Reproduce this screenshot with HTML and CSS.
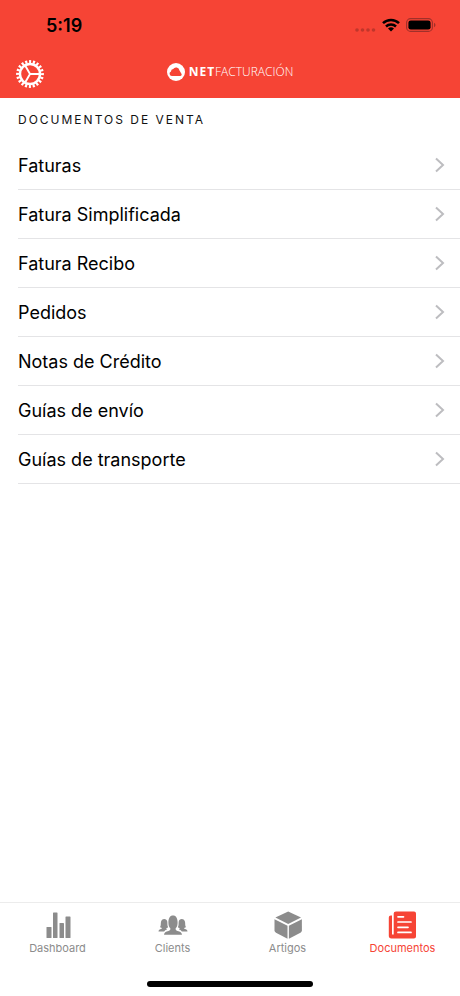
FILE: index.html
```html
<!DOCTYPE html>
<html lang="pt">
<head>
  <meta charset="UTF-8">
  <meta name="viewport" content="width=device-width, initial-scale=1">
  <title>Netfacturación - Documentos</title>
  <link rel="stylesheet" href="styles.css">
</head>
<body>
  <header class="app-header">
    <div class="status-bar">
      <span class="status-time">5:19</span>
      <div class="status-icons">
        <svg class="signal" width="22" height="4" viewBox="0 0 22 4">
          <circle cx="3" cy="2" r="1.8"/>
          <circle cx="8.5" cy="2" r="1.8"/>
          <circle cx="14" cy="2" r="1.8"/>
          <circle cx="19.5" cy="2" r="1.8"/>
        </svg>
        <svg width="18" height="14" viewBox="0 0 18 14">
          <g fill="none" stroke="#000" stroke-width="2.5">
            <path d="M1 5.2a11.5 11.5 0 0 1 16 0"/>
            <path d="M4 8.5a7.2 7.2 0 0 1 10 0"/>
          </g>
          <path d="M9 13.6 6 10.6a4.3 4.3 0 0 1 6 0z"/>
        </svg>
        <svg width="30" height="14" viewBox="0 0 30 14">
          <rect x=".6" y=".6" width="25.8" height="12.8" rx="4" fill="none" stroke="#a0302a" stroke-width="1.1"/>
          <rect x="2.4" y="2.4" width="22.2" height="9.2" rx="2.4"/>
          <path d="M28 4.8c2 .8 2 3.6 0 4.4z" fill="#a0302a"/>
        </svg>
      </div>
    </div>
    <div class="nav-bar">
      <button class="settings" type="button" aria-label="Definições">
        <svg width="28" height="28" viewBox="0 0 28 28" fill="none" stroke="#fff">
          <circle cx="14" cy="14" r="12.3" stroke-width="3.2" pathLength="40" stroke-dasharray="1.1 .9" stroke-dashoffset=".5"/>
          <circle cx="14" cy="14" r="10" stroke-width="2.4"/>
          <path d="M14 14h10M14 14 9 5.3M14 14 9 22.7" stroke-width="1.9"/>
        </svg>
      </button>
      <div class="logo">
        <svg width="18" height="18" viewBox="0 0 18 18">
          <circle cx="9" cy="9" r="9" fill="#fff"/>
          <path d="M4.8 13a2.4 2.4 0 0 1-.8-4.6 2.3 2.3 0 0 1 2.2-2.4 3.5 3.5 0 0 1 6.3 1.4l1.8 3.1a1.5 1.5 0 0 1-1.3 2.5z" fill="#f64435"/>
        </svg>
        <span><b>NET</b>FACTURACIÓN</span>
      </div>
    </div>
  </header>

  <main class="content">
    <h1 class="list-title">DOCUMENTOS DE VENTA</h1>
    <ul class="doc-list">
      <li><a href="#">Faturas <svg class="chevron" width="10" height="16" viewBox="0 0 10 16"><path d="M1 1.5 8 8l-7 6.5"/></svg></a></li>
      <li><a href="#">Fatura Simplificada <svg class="chevron" width="10" height="16" viewBox="0 0 10 16"><path d="M1 1.5 8 8l-7 6.5"/></svg></a></li>
      <li><a href="#">Fatura Recibo <svg class="chevron" width="10" height="16" viewBox="0 0 10 16"><path d="M1 1.5 8 8l-7 6.5"/></svg></a></li>
      <li><a href="#">Pedidos <svg class="chevron" width="10" height="16" viewBox="0 0 10 16"><path d="M1 1.5 8 8l-7 6.5"/></svg></a></li>
      <li><a href="#">Notas de Crédito <svg class="chevron" width="10" height="16" viewBox="0 0 10 16"><path d="M1 1.5 8 8l-7 6.5"/></svg></a></li>
      <li><a href="#">Guías de envío <svg class="chevron" width="10" height="16" viewBox="0 0 10 16"><path d="M1 1.5 8 8l-7 6.5"/></svg></a></li>
      <li><a href="#">Guías de transporte <svg class="chevron" width="10" height="16" viewBox="0 0 10 16"><path d="M1 1.5 8 8l-7 6.5"/></svg></a></li>
    </ul>
  </main>

  <footer class="tab-bar">
    <nav class="tabs">
      <a href="#">
        <svg width="30" height="28" viewBox="0 0 30 28">
          <rect x="3.5" y="16" width="5" height="11" rx=".6"/>
          <rect x="10" y="1.5" width="4.5" height="25.5" rx=".6"/>
          <rect x="16.5" y="12" width="4.5" height="15" rx=".6"/>
          <rect x="22.5" y="5.5" width="5" height="21.5" rx=".6"/>
        </svg>
        Dashboard
      </a>
      <a href="#">
        <svg width="30" height="28" viewBox="0 0 30 28">
          <path d="M6 23.800c0-2.300 1.900-3.300 4.500-3.900 1.500-.4 2-1 1.900-2.300-1.500-1.500-2-3.300-2-6 0-4.400 1.500-7.100 4.600-7.100s4.600 2.700 4.600 7.100c0 2.700-.5 4.500-2 6-.1 1.300.4 1.900 1.900 2.300 2.600.6 4.500 1.600 4.500 3.900z"/>
          <path d="M.5 20.500c0-1.700 1.300-2 2.600-2.500.9-.3 1-.9.3-1.200-.7-.2-1.200-.5-1.300-.9 1-1.300.5-3.300.9-5.200.4-1.700 1.500-2.800 3.200-2.800s2.800 1 3.100 2.800c.2 2.100-.1 4.300.8 5.300-.2.600-.8.800-1.500 1-.5.400-.2 1 .5 1.300-1 .5-2.100 1-3 2.200z"/>
          <path d="M29.500 20.500c0-1.700-1.300-2-2.600-2.500-.9-.3-1-.9-.3-1.200.7-.2 1.200-.5 1.300-.9-1-1.300-.5-3.300-.9-5.200-.4-1.700-1.500-2.800-3.200-2.800s-2.800 1-3.100 2.800c-.2 2.100.1 4.300-.8 5.300.2.600.8.800 1.500 1 .5.400.2 1-.5 1.300 1 .5 2.100 1 3 2.200z"/>
        </svg>
        Clients
      </a>
      <a href="#">
        <svg width="30" height="28" viewBox="0 0 30 28">
          <path d="M15.2.5 28 6.600 15.200 12.900 2.400 6.600z"/>
          <path d="M1.500 8.200 14.500 14.700V27.800L3 21.700Q1.500 20.900 1.500 19.300z"/>
          <path d="M28.900 8.200 15.900 14.700V27.800L27.400 21.700Q28.900 20.900 28.900 19.300z"/>
        </svg>
        Artigos
      </a>
      <a class="active" href="#">
        <svg width="30" height="28" viewBox="0 0 30 28">
          <path d="M8 .5h18q2 0 2 2v23q0 2-2 2H3.500q-2.700 0-2.700-2.700V6.500q0-2 2-2h1.200V23.500h1.700V2.500q0-2 2.300-2z"/>
          <path d="M10 5.800h5.500M10 11h13M10 16.300h10M10 21.400h13" fill="none" stroke="#fff" stroke-width="1.7" stroke-linecap="round"/>
        </svg>
        Documentos
      </a>
    </nav>
    <div class="home-indicator"></div>
  </footer>
</body>
</html>
```

FILE: styles.css
```css
* {
  box-sizing: border-box;
}

body {
  margin: 0;
  min-height: 100vh;
  display: flex;
  flex-direction: column;
  background-color: #fff;
  color: #000;
  font-family: Inter, "Liberation Sans", sans-serif;
}

svg {
  display: block;
  flex-shrink: 0;
}

a {
  color: inherit;
  text-decoration: none;
}

/* header */
.app-header {
  background-color: #f64435;
}

.status-bar {
  display: flex;
  justify-content: space-between;
  align-items: center;
  height: 50px;
  padding: 0 24px 0 46px;
}

.status-time {
  font-size: 18px;
  font-weight: 600;
}

.status-icons {
  display: flex;
  align-items: center;
  gap: 6px;
}

.signal {
  align-self: flex-end;
  fill: #c0362b;
}

.nav-bar {
  display: grid;
  grid-template-columns: 1fr auto 1fr;
  align-items: center;
  height: 48px;
  padding: 0 16px 4px;
}

.settings {
  justify-self: start;
  padding: 4px 0 0;
  border: none;
  background: none;
  cursor: pointer;
}

.logo {
  display: flex;
  align-items: center;
  gap: 4px;
  color: #fff;
  font-family: "Open Sans", "Noto Sans", sans-serif;
  font-size: 12px;
  font-weight: 300;
  line-height: 16px;
}

.logo b {
  font-weight: 700;
  letter-spacing: 1px;
}

/* document list */
.content {
  flex: 1;
}

.list-title {
  margin: 0;
  padding: 13px 18px 12px;
  font-size: 12px;
  font-weight: 400;
  line-height: 18px;
  letter-spacing: 2px;
  color: #111;
}

.doc-list {
  list-style: none;
  margin: 0;
  padding: 0 0 0 18px;
}

.doc-list a {
  display: flex;
  justify-content: space-between;
  align-items: center;
  height: 49px;
  padding-right: 15px;
  border-bottom: 1px solid #e4e4e6;
  font-size: 18px;
}

.chevron path {
  fill: none;
  stroke: #bdbdc0;
  stroke-width: 2;
}

/* bottom tabs */
.tab-bar {
  border-top: 1px solid #ececec;
  padding: 8px 0 9px;
}

.tabs {
  display: grid;
  grid-template-columns: repeat(4, 1fr);
}

.tabs a {
  display: flex;
  flex-direction: column;
  align-items: center;
  gap: 1px;
  color: #8c8c8c;
  font-size: 11px;
  line-height: 16px;
}

.tabs svg {
  fill: currentColor;
}

.tabs .active {
  color: #f64435;
}

.home-indicator {
  width: 36%;
  height: 6px;
  margin: 25px auto 0;
  border-radius: 3px;
  background-color: #000;
}
```
